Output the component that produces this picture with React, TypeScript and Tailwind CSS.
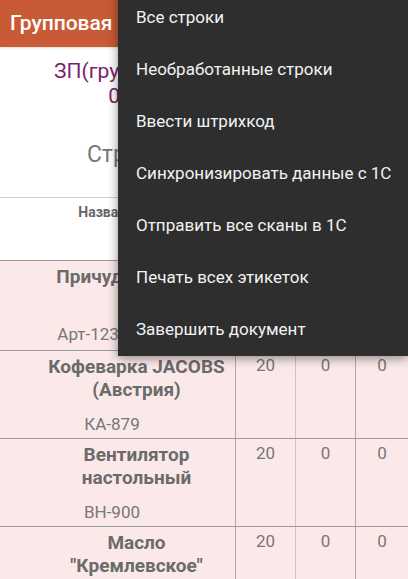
import React from 'react';

const menuItems = [
  'Все строки',
  'Необработанные строки',
  'Ввести штрихкод',
  'Синхронизировать данные с 1С',
  'Отправить все сканы в 1С',
  'Печать всех этикеток',
  'Завершить документ',
];

const rows = [
  { name: ['Причудливый кот', ''], art: 'Арт-12345678', plan: 20, fact: 0, scan: 0, h: 'h-[90px]' },
  { name: ['Кофеварка JACOBS', '(Австрия)'], art: 'КА-879', plan: 20, fact: 0, scan: 0, h: 'h-[88px]' },
  { name: ['Вентилятор', 'настольный'], art: 'ВН-900', plan: 20, fact: 0, scan: 0, h: 'h-[88px]' },
  { name: ['Масло', '"Кремлевское"'], art: 'МК-100', plan: 20, fact: 0, scan: 0, h: 'h-[88px]' },
];

export default function App() {
  return (
    <div className="relative w-[408px] h-[579px] overflow-hidden bg-white font-['Roboto',sans-serif]">
      {/* app bar */}
      <div className="h-[47px] bg-[#c85a36] flex items-center px-[10px] shadow">
        <span className="text-white text-[21px] font-medium whitespace-nowrap">Групповая приемка</span>
      </div>

      {/* document header */}
      <div className="h-[150px] flex flex-col items-center">
        <div className="mt-[12px] text-[#7f1d6e] text-[21px] leading-[25px] text-center whitespace-nowrap">
          <div>ЗП(групповая приемка) №1 от</div>
          <div>01.06.2023 12:00:00</div>
        </div>
        <div className="mt-[32px] text-[#777] text-[23px] leading-[28px] whitespace-nowrap">Строки документа (4)</div>
      </div>

      {/* table */}
      <div className="border-t border-[#cfcfcf]">
        <div className="grid grid-cols-[235px_60px_60px_1fr] h-[63px] border-b border-[#9a9a9a] text-[14px] font-bold text-[#666]">
          <div className="text-center pt-[4px] pl-[34px] whitespace-nowrap">Название товара</div>
          <div className="text-center pt-[4px] border-l border-[#aaa]">План</div>
          <div className="text-center pt-[4px] border-l border-[#d3c2c2]">Факт</div>
          <div className="text-center pt-[4px] border-l border-[#aaa]">Скан</div>
        </div>
        {rows.map((r, i) => (
          <div
            key={i}
            className={`grid grid-cols-[235px_60px_60px_1fr] ${r.h} bg-[#fbe9e9] border-b border-[#9a9a9a] text-[#777]`}
          >
            <div className="flex flex-col pt-[4px]">
              <div className="pl-[38px] text-[19px] font-bold text-[#6b6b6b] leading-[23px] text-center h-[46px] whitespace-nowrap">
                <div>{r.name[0]}</div>
                <div>{r.name[1]}</div>
              </div>
              <div className="pr-[11px] mt-[12px] text-[17px] leading-[22px] text-center whitespace-nowrap">{r.art}</div>
            </div>
            <div className="text-center text-[17px] pt-[2px] border-l border-[#aaa]">{r.plan}</div>
            <div className="text-center text-[17px] pt-[2px] border-l border-[#d3c2c2]">{r.fact}</div>
            <div className="text-center text-[17px] pt-[2px] border-l border-[#aaa]">{r.scan}</div>
          </div>
        ))}
      </div>

      {/* overflow menu */}
      <div className="absolute top-[-8px] left-[118px] right-0 bg-[#2e2e2e] shadow-[0_2px_10px_rgba(0,0,0,0.45)]">
        {menuItems.map((m) => (
          <div key={m} className="h-[52px] flex items-center pl-[18px] text-[17px] text-[#f2f2f2] whitespace-nowrap">
            {m}
          </div>
        ))}
      </div>
    </div>
  );
}
